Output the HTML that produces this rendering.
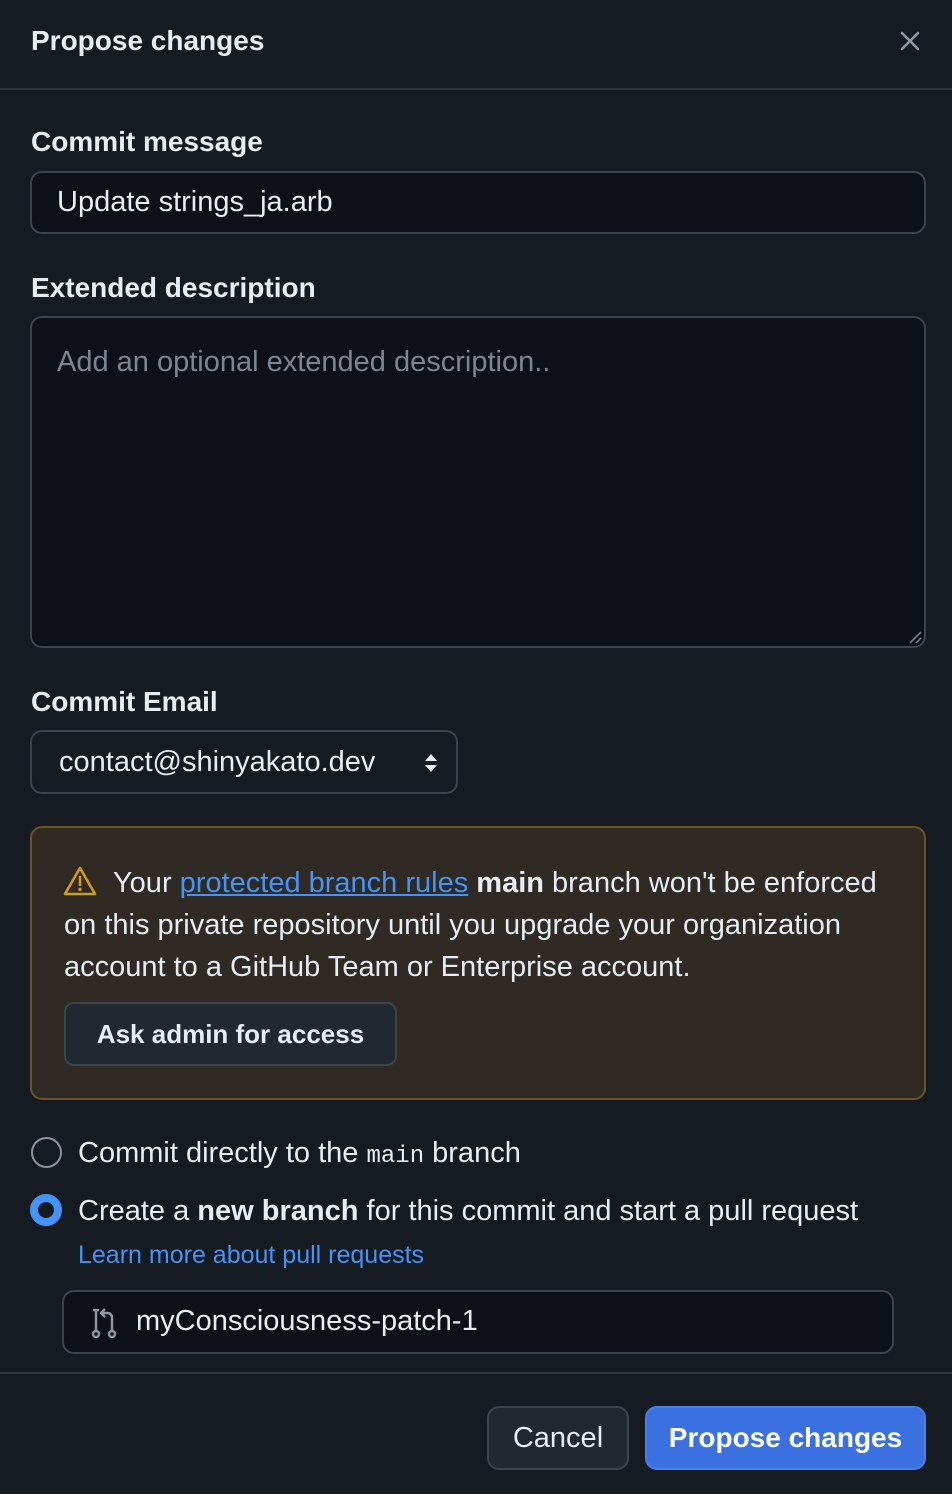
<!DOCTYPE html>
<html><head><style>
*{box-sizing:border-box;margin:0;padding:0}
body{width:952px;height:1494px;background:#161b22;font-family:"Liberation Sans",sans-serif;color:#e6edf3;position:relative;overflow:hidden;font-size:29px}
.abs{position:absolute}
.lbl{font-weight:bold;font-size:28px;color:#e6edf3}
.inp{background:#0d1117;border:2px solid #3d444d;border-radius:12px}
</style></head><body>
<div class="abs lbl" style="left:31px;top:25px">Propose changes</div>
<svg class="abs" style="left:898px;top:29px" width="24" height="24" viewBox="0 0 24 24"><path d="M4 4L20 20M20 4L4 20" stroke="#9198a1" stroke-width="2.6" stroke-linecap="round"/></svg>
<div class="abs" style="left:0;top:88px;width:952px;height:2px;background:#30363d"></div>
<div class="abs lbl" style="left:31px;top:126px">Commit message</div>
<div class="abs inp" style="left:30px;top:171px;width:896px;height:63px"></div>
<div class="abs" style="left:57px;top:186px">Update strings_ja.arb</div>
<div class="abs lbl" style="left:31px;top:272px">Extended description</div>
<div class="abs inp" style="left:30px;top:316px;width:896px;height:332px"></div>
<div class="abs" style="left:57px;top:346px;color:#7d8590">Add an optional extended description..</div>
<svg class="abs" style="left:908px;top:630px" width="14" height="14"><path d="M2 13L13 2M8 13L13 8" stroke="#7d8590" stroke-width="1.5"/></svg>
<div class="abs lbl" style="left:31px;top:686px">Commit Email</div>
<div class="abs" style="left:30px;top:730px;width:428px;height:64px;background:#161b22;border:2px solid #3d444d;border-radius:12px"></div>
<div class="abs" style="left:59px;top:746px">contact@shinyakato.dev</div>
<svg class="abs" style="left:422px;top:752px" width="18" height="22"><path d="M9 2L15 9H3Z M9 20L15 13H3Z" fill="#e6edf3"/></svg>
<div class="abs" style="left:30px;top:826px;width:896px;height:274px;background:#2f2a24;border:2px solid #6a5327;border-radius:12px"></div>
<svg class="abs" style="left:63px;top:865px" width="34" height="32" viewBox="0 0 34 32"><path d="M17 3L32 29H2Z" fill="none" stroke="#d29922" stroke-width="2.6" stroke-linejoin="round"/><path d="M17 12V20" stroke="#d29922" stroke-width="2.6" stroke-linecap="round"/><circle cx="17" cy="24.5" r="1.7" fill="#d29922"/></svg>
<div class="abs" style="left:64px;top:862px;width:840px;line-height:42px;color:#e6edf3"><span style="padding-left:49px"></span>Your <span style="color:#4493f8;text-decoration:underline">protected branch rules</span> <b>main</b> branch won't be enforced on this private repository until you upgrade your organization account to a GitHub Team or Enterprise account.</div>
<div class="abs" style="left:64px;top:1002px;width:333px;height:64px;background:#212830;border:2px solid #3d444d;border-radius:10px;text-align:center;line-height:60px;font-size:26px;font-weight:bold">Ask admin for access</div>
<div class="abs" style="left:31px;top:1137px;width:31px;height:31px;border:2px solid #8b949e;border-radius:50%"></div>
<div class="abs" style="left:78px;top:1137px">Commit directly to the <span style="font-family:'Liberation Mono',monospace;font-size:24px">main</span> branch</div>
<div class="abs" style="left:30px;top:1194px;width:32px;height:32px;border:8px solid #4493f8;border-radius:50%;background:#161b22"></div>
<div class="abs" style="left:78px;top:1195px">Create a <b>new branch</b> for this commit and start a pull request</div>
<div class="abs" style="left:78px;top:1241px;color:#4493f8;font-size:25px">Learn more about pull requests</div>
<div class="abs inp" style="left:62px;top:1290px;width:832px;height:64px"></div>
<svg class="abs" style="left:88px;top:1306px" width="32" height="34" viewBox="0 0 32 34"><g fill="none" stroke="#9198a1" stroke-width="2.4"><circle cx="8" cy="28" r="3"/><circle cx="24" cy="28" r="3"/><path d="M8 4V25"/><path d="M24 25V12Q24 7 19 7H14M17 3L13 7L17 11"/><path d="M5 4h6"/></g></svg>
<div class="abs" style="left:136px;top:1305px">myConsciousness-patch-1</div>
<div class="abs" style="left:0;top:1372px;width:952px;height:2px;background:#30363d"></div>
<div class="abs" style="left:487px;top:1406px;width:142px;height:64px;background:#212830;border:2px solid #3d444d;border-radius:12px;text-align:center;line-height:60px">Cancel</div>
<div class="abs" style="left:645px;top:1406px;width:281px;height:64px;background:#3a70e0;border:2px solid #4a7fe8;border-radius:12px;text-align:center;line-height:60px;font-weight:bold;color:#fff;font-size:28px">Propose changes</div>
</body></html>
